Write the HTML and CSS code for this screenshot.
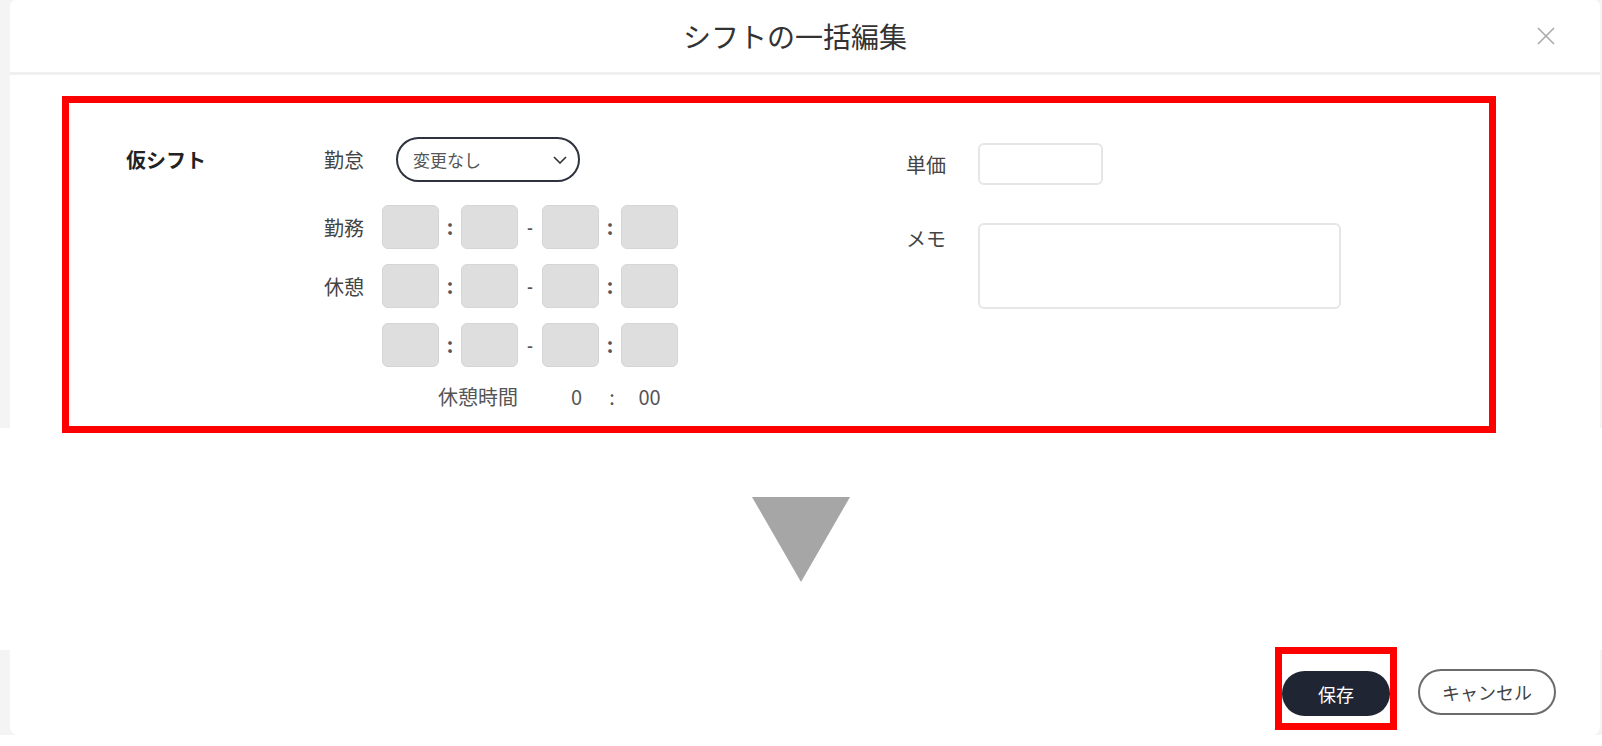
FILE: index.html
```html
<!DOCTYPE html>
<html lang="ja">
<head>
    <meta charset="UTF-8">
    <meta name="viewport" content="width=device-width, initial-scale=1.0">
    <title>シフトの一括編集</title>
    <link rel="stylesheet" href="styles.css">
</head>
<body>
    <div class="slice slice-top">
        <div class="sheet sheet-top">
            <header class="modal-header">
                <h1>シフトの一括編集</h1>
                <button class="close-btn" type="button" title="閉じる">
                    <svg width="18" height="18" viewBox="0 0 18 18"><path d="M1 1L17 17M17 1L1 17" stroke="#a9a9a9" stroke-width="1.6" fill="none"/></svg>
                </button>
            </header>
            <div class="modal-body">
                <section class="highlight edit-area">
                    <div class="group-title">仮シフト</div>

                    <div class="shift-form">
                        <div class="row row-kintai">
                            <span class="label">勤怠</span>
                            <div class="select">
                                <span>変更なし</span>
                                <svg width="14" height="8" viewBox="0 0 14 8"><path d="M1 1L7 7L13 1" stroke="#333" stroke-width="1.6" fill="none"/></svg>
                            </div>
                        </div>
                        <div class="row">
                            <span class="label">勤務</span>
                            <div class="time-grid">
                                <span class="box"></span><span class="sep">:</span><span class="box"></span><span class="sep dash">-</span><span class="box"></span><span class="sep">:</span><span class="box"></span>
                            </div>
                        </div>
                        <div class="row">
                            <span class="label">休憩</span>
                            <div class="time-grid">
                                <span class="box"></span><span class="sep">:</span><span class="box"></span><span class="sep dash">-</span><span class="box"></span><span class="sep">:</span><span class="box"></span>
                            </div>
                        </div>
                        <div class="row">
                            <span class="label"></span>
                            <div class="time-grid">
                                <span class="box"></span><span class="sep">:</span><span class="box"></span><span class="sep dash">-</span><span class="box"></span><span class="sep">:</span><span class="box"></span>
                            </div>
                        </div>
                        <div class="row">
                            <span class="label"></span>
                            <div class="time-grid total">
                                <span class="total-label">休憩時間</span>
                                <span class="total-hour">0</span>
                                <span class="sep">:</span>
                                <span class="total-min">00</span>
                            </div>
                        </div>
                    </div>

                    <div class="side-form">
                        <div class="side-row">
                            <span class="label side-label">単価</span>
                            <input class="price" type="text">
                        </div>
                        <div class="side-row memo-row">
                            <span class="label side-label">メモ</span>
                            <textarea class="memo"></textarea>
                        </div>
                    </div>
                </section>
            </div>
        </div>
    </div>

    <div class="arrow">
        <svg width="98" height="85" viewBox="0 0 98 85"><polygon points="0,0 98,0 49,85" fill="#a6a6a6"/></svg>
    </div>

    <div class="slice slice-bottom">
        <div class="sheet sheet-bottom">
            <footer class="modal-footer">
                <div class="highlight save-mark">
                    <button class="btn btn-primary" type="button">保存</button>
                </div>
                <button class="btn btn-outline" type="button">キャンセル</button>
            </footer>
        </div>
    </div>
</body>
</html>
```

FILE: styles.css
```css
* {
    box-sizing: border-box;
}
html, body {
    margin: 0;
    background: #fff;
}
body {
    width: 1602px;
    height: 746px;
    overflow: hidden;
    font-family: "Noto Sans CJK JP", "Noto Sans", sans-serif;
    color: #444;
}

/* gray page strips behind the modal pieces */
.slice {
    background: #f4f4f4;
    padding: 0 2px 0 10px;
}
.slice-top {
    height: 428px;
}
.slice-bottom {
    height: 85px;
    margin-top: 68px;
}
.sheet {
    background: #fff;
    height: 100%;
}
.sheet-top {
    border-radius: 6px 6px 0 0;
}
.sheet-bottom {
    border-radius: 0 0 8px 8px;
}

.modal-header {
    height: 75px;
    display: grid;
    grid-template-columns: 1fr auto 1fr;
    align-items: center;
    padding-right: 20px;
    border-bottom: 3px solid #f0f0f0;
}
.modal-header h1 {
    grid-column: 2;
    margin: 0;
    font-size: 28px;
    font-weight: 400;
    color: #333;
    line-height: 1.3;
}
.close-btn {
    grid-column: 3;
    justify-self: end;
    margin-right: 25px;
    padding: 0;
    border: 0;
    background: none;
    line-height: 0;
    cursor: pointer;
}

.modal-body {
    padding-top: 21px;
}
.highlight {
    border: 7px solid #ff0000;
}
.edit-area {
    width: 1434px;
    margin-left: 52px;
    padding: 34px 0 18px 57px;
    display: flex;
    align-items: flex-start;
}
.group-title {
    width: 198px;
    line-height: 45px;
    font-size: 20px;
    font-weight: 700;
    color: #222;
}

.label {
    font-size: 20px;
    color: #444;
}
.shift-form {
    display: flex;
    flex-direction: column;
    gap: 15px;
}
.row {
    display: flex;
    align-items: center;
}
.row .label {
    width: 58px;
}
.row-kintai {
    margin-bottom: 8px;
}
.select {
    width: 184px;
    height: 45px;
    margin-left: 14px;
    padding: 0 11px 0 15px;
    display: flex;
    align-items: center;
    justify-content: space-between;
    border: 2px solid #2d323c;
    border-radius: 23px;
    font-size: 17px;
    color: #555;
}

.time-grid {
    display: grid;
    grid-template-columns: 57px 22px 57px 24px 57px 22px 57px;
    align-items: center;
    justify-items: center;
}
.box {
    width: 57px;
    height: 44px;
    background: #dedede;
    border: 1px solid #d5d5d5;
    border-radius: 6px;
}
.sep {
    font-size: 20px;
    font-weight: 700;
    color: #555;
    line-height: 1;
}
.sep.dash {
    font-size: 16px;
}
.total {
    height: 26px;
    font-size: 20px;
    color: #555;
}
.total-label {
    grid-column: 1 / 4;
    justify-self: end;
}
.total-hour {
    grid-column: 5;
    padding-left: 12px;
}
.total .sep {
    grid-column: 6;
    font-weight: 400;
    padding-left: 4px;
}
.total-min {
    grid-column: 7;
}

.side-form {
    margin-left: 228px;
    margin-top: 6px;
    display: flex;
    flex-direction: column;
    gap: 38px;
}
.side-row {
    display: flex;
    align-items: center;
}
.side-label {
    width: 72px;
}
.memo-row {
    align-items: flex-start;
}
.memo-row .side-label {
    line-height: 32px;
}
.price,
.memo {
    display: block;
    margin: 0;
    border: 2px solid #e6e6e6;
    border-radius: 6px;
    background: #fff;
    font: inherit;
    resize: none;
}
.price {
    width: 125px;
    height: 42px;
}
.memo {
    width: 363px;
    height: 86px;
}

.arrow {
    display: flex;
    justify-content: center;
    margin-top: 69px;
    line-height: 0;
}

.modal-footer {
    height: 100%;
    display: flex;
    justify-content: flex-end;
    align-items: flex-start;
    padding-right: 44px;
}
.save-mark {
    margin-top: -3px;
    padding: 17px 0 7px;
}
.btn {
    height: 45px;
    border-radius: 23px;
    font-family: inherit;
    font-size: 18px;
    cursor: pointer;
}
.btn-primary {
    display: block;
    width: 108px;
    border: 0;
    background: #1f2533;
    color: #fff;
}
.btn-outline {
    width: 138px;
    height: 46px;
    margin-top: 19px;
    margin-left: 21px;
    border: 2px solid #6b6b6b;
    background: #fff;
    color: #444;
}
```
